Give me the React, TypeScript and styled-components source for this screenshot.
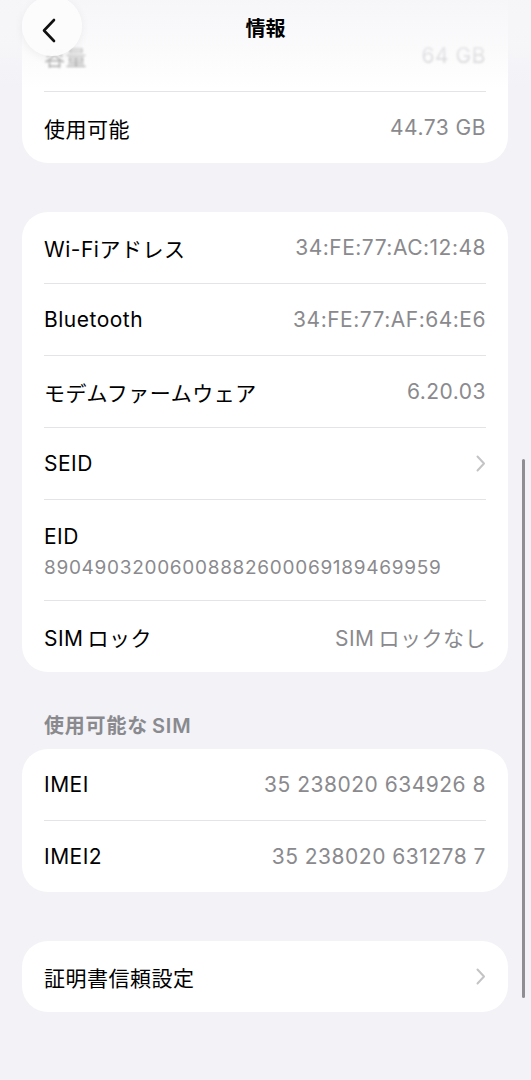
import { createGlobalStyle, styled } from "styled-components";

const GlobalStyle = createGlobalStyle`
  html, body {
    margin: 0;
    padding: 0;
    background: #f2f2f7;
    overflow: hidden;
  }
  body {
    font-family: "Inter", "Noto Sans CJK JP", sans-serif;
    -webkit-font-smoothing: antialiased;
  }
`;

const Screen = styled.div`
  position: relative;
  width: 531px;
  height: 1080px;
  overflow: hidden;
  background: #f2f2f7;
`;

const Content = styled.div`
  display: flex;
  flex-direction: column;
  padding: 0 23px 0 22px;
`;

const Card = styled.div<{ $clipTop?: boolean; $gap?: number }>`
  background: #ffffff;
  border-radius: 26px;
  overflow: hidden;
  margin-top: ${(p) => (p.$clipTop ? "-40px" : `${p.$gap ?? 0}px`)};
  padding-top: ${(p) => (p.$clipTop ? "60px" : "0")};
`;

const Row = styled.div<{ $faded?: boolean }>`
  display: flex;
  align-items: center;
  justify-content: space-between;
  height: 71px;
  padding: 0 22px;
  font-size: 21px;
  color: #000;
  filter: ${(p) => (p.$faded ? "blur(0.8px)" : "none")};
  opacity: ${(p) => (p.$faded ? 0.5 : 1)};
`;

const Separator = styled.div`
  height: 1px;
  background: #e3e3e8;
  margin: 0 22px;
`;

const Label = styled.span`
  letter-spacing: 0.5px;
`;

const Value = styled.span`
  color: #8a8a8e;
  letter-spacing: 0.5px;
`;

const Latin = styled.span`
  margin-right: 4px;
`;

const StackRow = styled.div`
  display: flex;
  flex-direction: column;
  padding: 24px 22px 19px;
  font-size: 21px;
  line-height: 26px;
`;

const SubValue = styled.span`
  margin-top: 5px;
  font-size: 19px;
  color: #8a8a8e;
  letter-spacing: 0.7px;
`;

const SectionHeader = styled.div`
  padding: 42px 22px 11px;
  font-size: 20px;
  line-height: 24px;
  font-weight: 600;
  letter-spacing: 0.8px;
  color: #8a8a8e;
`;

const HeaderFade = styled.div`
  position: absolute;
  top: 0;
  left: 0;
  right: 0;
  height: 88px;
  background: linear-gradient(
    to bottom,
    rgba(246, 246, 249, 0.96) 0%,
    rgba(248, 248, 250, 0.7) 50%,
    rgba(255, 255, 255, 0) 100%
  );
  pointer-events: none;
`;

const Title = styled.div`
  position: absolute;
  top: 13px;
  left: 0;
  right: 0;
  text-align: center;
  font-size: 20px;
  font-weight: 700;
  color: #000;
`;

const BackButton = styled.button`
  position: absolute;
  top: -4px;
  left: 22px;
  width: 60px;
  height: 60px;
  border-radius: 50%;
  border: none;
  background: rgba(252, 252, 253, 0.96);
  box-shadow: 0 2px 10px rgba(0, 0, 0, 0.06);
  display: flex;
  align-items: center;
  justify-content: center;
  padding: 0 6px 0 0;
  cursor: pointer;
  svg {
    margin-top: 8px;
  }
`;

const ScrollBar = styled.div`
  position: absolute;
  right: 6px;
  top: 459px;
  width: 3px;
  height: 539px;
  border-radius: 2px;
  background: #8e8e93;
`;

const Chevron = () => (
  <svg width="10" height="17" viewBox="0 0 10 17" fill="none">
    <path d="M1.5 1.5 L8 8.5 L1.5 15.5" stroke="#c4c4c7" strokeWidth="2" strokeLinecap="round" strokeLinejoin="round" />
  </svg>
);

const BackIcon = () => (
  <svg width="16" height="25" viewBox="0 0 16 25" fill="none">
    <path d="M13 2 L3 12.5 L13 23" stroke="#111" strokeWidth="2.6" strokeLinecap="round" strokeLinejoin="round" />
  </svg>
);

type Item = { label: string; value?: string; link?: boolean };

const network: Item[] = [
  { label: "Wi-Fiアドレス", value: "34:FE:77:AC:12:48" },
  { label: "Bluetooth", value: "34:FE:77:AF:64:E6" },
  { label: "モデムファームウェア", value: "6.20.03" },
  { label: "SEID", link: true },
];

const sims: Item[] = [
  { label: "IMEI", value: "35 238020 634926 8" },
  { label: "IMEI2", value: "35 238020 631278 7" },
];

function ItemRow({ label, value, link }: Item) {
  return (
    <Row>
      <Label>{label}</Label>
      {link ? <Chevron /> : <Value>{value}</Value>}
    </Row>
  );
}

export default function App() {
  return (
    <>
      <GlobalStyle />
      <Screen>
        <Content>
          <Card $clipTop>
            <Row $faded>
              <Label>容量</Label>
              <Value>64 GB</Value>
            </Row>
            <Separator />
            <ItemRow label="使用可能" value="44.73 GB" />
          </Card>

          <Card $gap={49}>
            {network.map((item) => (
              <div key={item.label}>
                <ItemRow {...item} />
                <Separator />
              </div>
            ))}
            <StackRow>
              <Label>EID</Label>
              <SubValue>89049032006008882600069189469959</SubValue>
            </StackRow>
            <Separator />
            <Row>
              <Label>
                <Latin>SIM</Latin>ロック
              </Label>
              <Value>
                <Latin>SIM</Latin>ロックなし
              </Value>
            </Row>
          </Card>

          <SectionHeader>
            使用可能な<Latin style={{ marginLeft: 4, marginRight: 0 }}>SIM</Latin>
          </SectionHeader>
          <Card>
            {sims.map((item, i) => (
              <div key={item.label}>
                {i > 0 && <Separator />}
                <ItemRow {...item} />
              </div>
            ))}
          </Card>

          <Card $gap={49}>
            <ItemRow label="証明書信頼設定" link />
          </Card>
        </Content>

        <HeaderFade />
        <Title>情報</Title>
        <BackButton aria-label="戻る">
          <BackIcon />
        </BackButton>
        <ScrollBar />
      </Screen>
    </>
  );
}
